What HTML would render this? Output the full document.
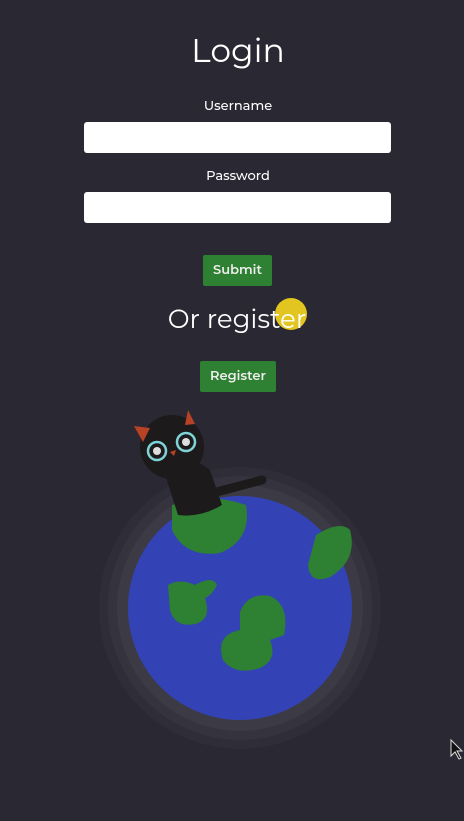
<!DOCTYPE html>
<html><head><style>
html,body{margin:0;padding:0;width:464px;height:821px;background:#2a2832;overflow:hidden;font-family:"Montserrat","Liberation Sans",sans-serif;color:#fff}
.a{position:absolute}
h1{position:absolute;top:31px;left:0;width:476px;text-align:center;margin:0;font-weight:400;font-size:33px}
.lbl{position:absolute;left:0;width:476px;text-align:center;font-size:13px;font-weight:500}
.inp{position:absolute;left:84px;width:307px;height:31px;background:#fff;border-radius:3px}
.btn{position:absolute;background:#2e8032;border-radius:2px;font-size:13px;font-weight:600;text-align:center;color:#eee}
</style></head><body>
<h1>Login</h1>
<div class="lbl" style="top:98px">Username</div>
<div class="inp" style="top:122px"></div>
<div class="lbl" style="top:168px">Password</div>
<div class="inp" style="top:192px"></div>
<div class="btn" style="left:203px;top:255px;width:69px;height:31px;line-height:31px">Submit</div>
<div class="a" style="left:275px;top:298px;width:32px;height:32px;border-radius:50%;background:#e2c51f"></div>
<div class="a" style="left:0;top:303px;width:474px;text-align:center;font-size:26px">Or register</div>
<div class="btn" style="left:200px;top:361px;width:76px;height:31px;line-height:31px">Register</div>
<svg class="a" style="left:0;top:0" width="464" height="821">
<circle cx="240" cy="608" r="141" fill="#2f2e38"/>
<circle cx="240" cy="608" r="132" fill="#35343e"/>
<circle cx="240" cy="608" r="123" fill="#3c3b45"/>
<circle cx="240" cy="608" r="112" fill="#3343b5"/>
<path d="M172 505 Q210 492 246 505 Q252 540 220 553 Q185 558 172 530Z" fill="#2e8132"/>
<path d="M316 535 Q340 520 350 530 Q358 560 330 577 Q310 585 308 565Z" fill="#2e8132"/>
<path d="M168 585 Q180 578 195 585 Q213 575 217 585 Q212 595 205 598 Q212 620 195 624 Q175 628 170 610Z" fill="#2e8132"/>
<path d="M240 612 Q248 592 270 596 Q290 605 284 635 L270 640 Q278 660 260 668 Q235 676 223 660 Q215 635 240 630Z" fill="#2e8132"/>
<path d="M205 495 L262 480" stroke="#1d1a1c" stroke-width="9" stroke-linecap="round"/>
<path d="M162 465 Q185 450 210 470 L222 505 Q200 518 178 515Z" fill="#1d1a1c"/>
<circle cx="172" cy="447" r="32" fill="#1d1a1c"/>
<path d="M134 426 L143 442 L150 428Z" fill="#b84226"/>
<path d="M188 410 L185 425 L195 424Z" fill="#b84226"/>
<circle cx="157" cy="451" r="9" fill="#1d1a1c" stroke="#7fd4d8" stroke-width="2.5"/>
<circle cx="186" cy="442" r="9" fill="#1d1a1c" stroke="#7fd4d8" stroke-width="2.5"/>
<circle cx="157" cy="451" r="4" fill="#ddd"/><circle cx="186" cy="442" r="4" fill="#ddd"/>
<path d="M170 452 L176 450 L174 456Z" fill="#b84226"/>
<path d="M451 740 L451 756 L455 752 L459 759 L461 758 L457 751 L462 751Z" fill="#111" stroke="#ddd" stroke-width="1"/>
</svg>
</body></html>
